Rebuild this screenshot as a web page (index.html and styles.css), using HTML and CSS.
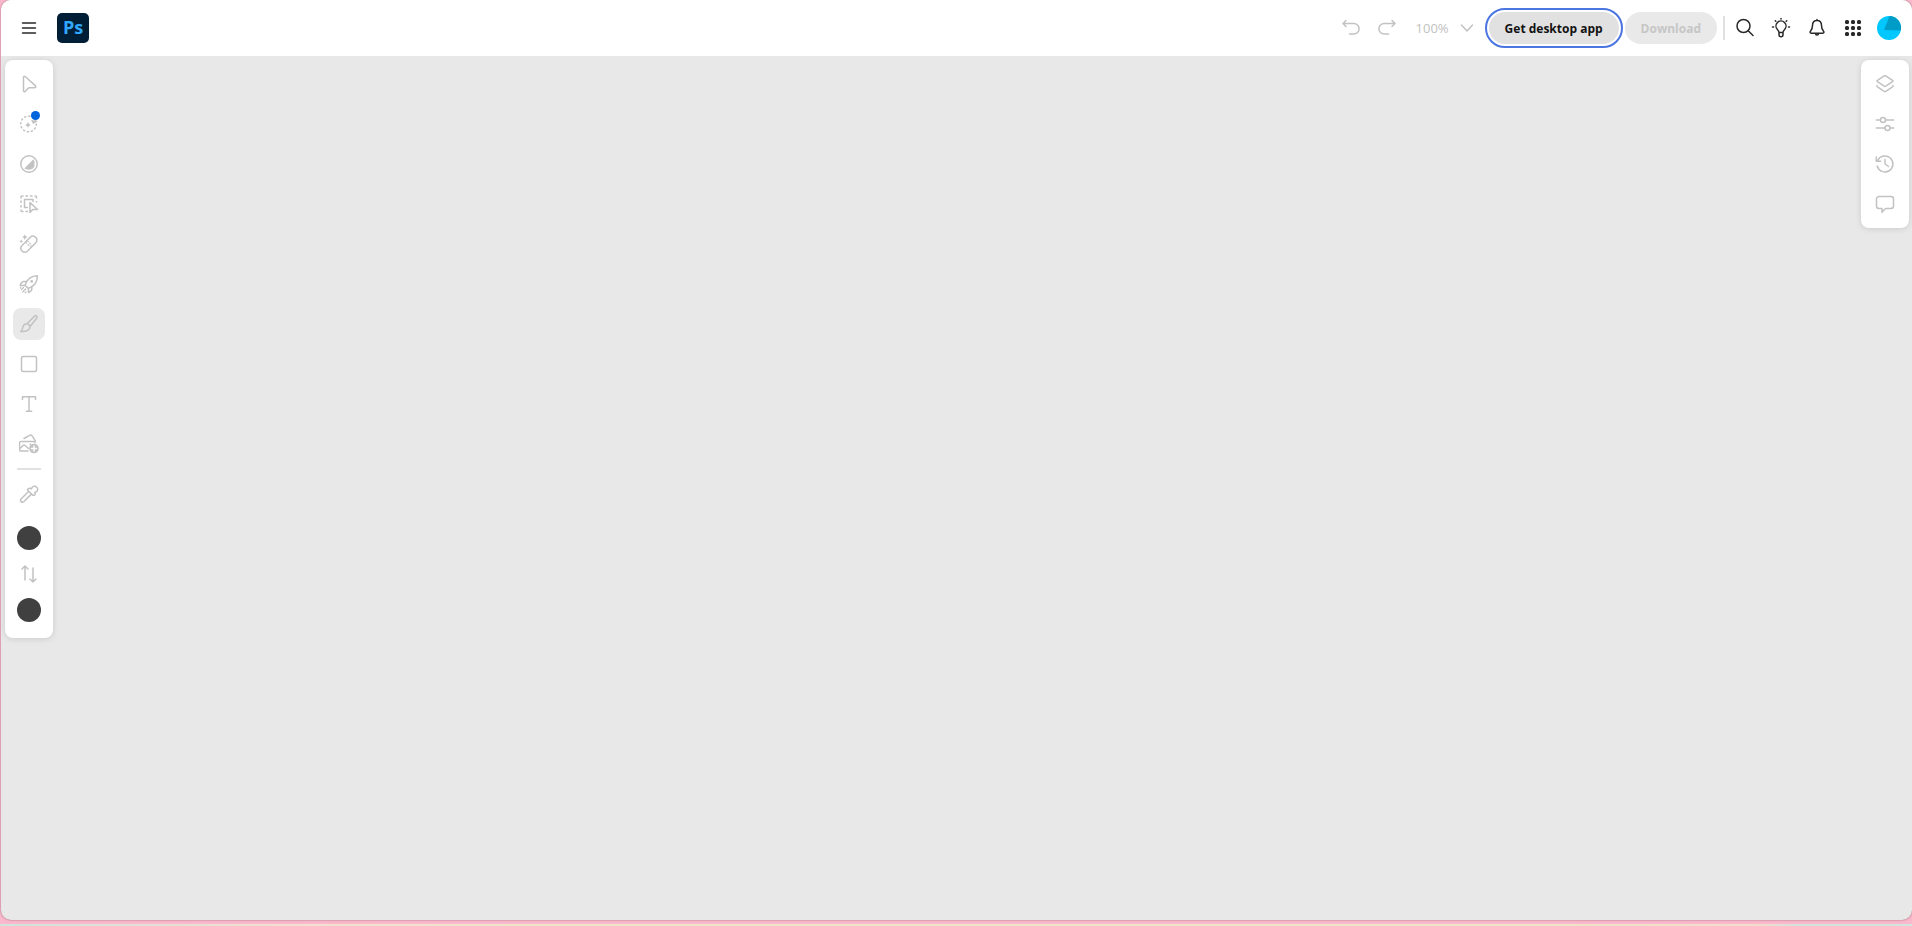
FILE: index.html
```html
<!DOCTYPE html>
<html lang="en">
<head>
    <meta charset="utf-8">
    <title>Photoshop</title>
    <link rel="stylesheet" href="styles.css">
</head>
<body>
    <div class="window">
        <header class="topbar">
            <button class="icon-button" aria-label="Menu">
                <svg viewBox="0 0 20 20"><path d="M3.500 5h13M3.500 10h13M3.500 15h13"/></svg>
            </button>
            <a class="logo" href="#">Ps</a>

            <div class="actions">
                <button class="icon-button disabled" aria-label="Undo" disabled>
                    <svg viewBox="0 0 20 20"><path d="M5 2.500L2 5.500l3 3M2 5.500h10.800a5.300 5.300 0 0 1 0 10.600H8.500"/></svg>
                </button>
                <button class="icon-button disabled" aria-label="Redo" disabled>
                    <svg viewBox="0 0 20 20"><path d="M15 2.500l3 3-3 3M18 5.500H7.200a5.300 5.300 0 0 0 0 10.600h4.300"/></svg>
                </button>
                <button class="zoom-level" disabled>
                    <span>100%</span>
                    <svg viewBox="0 0 20 20"><path d="M4.500 7l5.500 6 5.500-6"/></svg>
                </button>
                <button class="pill desktop-app">Get desktop app</button>
                <button class="pill download" disabled>Download</button>
                <span class="divider"></span>
                <div class="account">
                    <button class="icon-button" aria-label="Search">
                        <svg viewBox="0 0 20 20"><circle cx="8.500" cy="8" r="6.500"/><path d="M13.200 12.700L18 17.500"/></svg>
                    </button>
                    <button class="icon-button" aria-label="Discover">
                        <svg viewBox="0 0 20 20">
                            <path d="M8 14.500c0-1.500-.6-2-1.600-3a5 5 0 1 1 7.200 0c-1 1-1.600 1.500-1.600 3zM8 14.500v2.300a2 2 0 0 0 4 0v-2.300"/>
                            <path d="M10 .5v.6M4.300 2.800l.5.500M15.700 2.800l-.5.500M1.500 9h1M17.500 9h1"/>
                        </svg>
                    </button>
                    <button class="icon-button" aria-label="Notifications">
                        <svg viewBox="0 0 20 20"><path d="M10 2.500c-3 0-4.500 2.200-4.500 5 0 3-.8 4.300-2 5.700-.9 1-.4 2 .7 2h11.600c1.100 0 1.600-1 .7-2-1.200-1.400-2-2.700-2-5.700 0-2.800-1.500-5-4.500-5zM10 1.500v1M8.500 15.500a1.500 1.500 0 0 0 3 0"/></svg>
                    </button>
                    <button class="icon-button" aria-label="Apps">
                        <svg class="solid" viewBox="0 0 20 20">
                            <rect x="2" y="2" width="4" height="4" rx="1.500"/><rect x="8" y="2" width="4" height="4" rx="1.500"/><rect x="14" y="2" width="4" height="4" rx="1.500"/>
                            <rect x="2" y="8" width="4" height="4" rx="1.500"/><rect x="8" y="8" width="4" height="4" rx="1.500"/><rect x="14" y="8" width="4" height="4" rx="1.500"/>
                            <rect x="2" y="14" width="4" height="4" rx="1.500"/><rect x="8" y="14" width="4" height="4" rx="1.500"/><rect x="14" y="14" width="4" height="4" rx="1.500"/>
                        </svg>
                    </button>
                    <button class="icon-button" aria-label="Account">
                        <svg class="avatar" viewBox="0 0 24 24">
                            <circle cx="12" cy="12" r="12" fill="#00c8ff"/>
                            <path d="M7 14L12.500 0A12 12 0 0 1 23.800 14.500z" fill="#009cc8"/>
                        </svg>
                    </button>
                </div>
            </div>
        </header>

        <main class="workspace">
            <nav class="panel" aria-label="Tools">
                <button class="tool" aria-label="Move" disabled>
                    <svg viewBox="0 0 20 20"><path d="M4.500 3.200v13.500c0 1 1 1.400 1.700.7l3-3.200c.3-.3.700-.5 1.100-.5h5.500c1 0 1.400-1.100.7-1.800L6.200 2.500c-.7-.7-1.700-.3-1.700.7z"/></svg>
                </button>
                <button class="tool" aria-label="Quick actions" disabled>
                    <svg viewBox="0 0 20 20">
                        <circle cx="9.500" cy="10" r="7.800" stroke-dasharray="1.200 2.880"/>
                        <path class="fill" d="M9 8l1 1.900 1.900 1-1.900 1-1 1.900-1-1.900-1.900-1 1.900-1z"/>
                        <path class="fill" d="M12 6l7 1-5 3z"/>
                    </svg>
                    <span class="badge"></span>
                </button>
                <button class="tool" aria-label="Adjustments" disabled>
                    <svg viewBox="0 0 20 20"><circle cx="10" cy="10" r="8.200"/><path class="fill" d="M14.500 5.300Q16 7.500 15.500 11.500q-.8 3.500-4 4-3.500.5-6.200-1z"/></svg>
                </button>
                <button class="tool" aria-label="Select" disabled>
                    <svg viewBox="0 0 20 20">
                        <path d="M2 4V3a1 1 0 0 1 1-1h1M7 2h1.500M11.500 2H13M16 2h.5a1 1 0 0 1 1 1v1M17.500 7.500v.5M2 7v1.500M2 11.500V13M2 16v.5a1 1 0 0 0 1 1h1M7 17.500h1.500"/>
                        <path d="M8.500 13.500H5.500v-8H14v2"/>
                        <path class="cutout" d="M11 8.500v10l2.700-3h4.800z"/>
                    </svg>
                </button>
                <button class="tool" aria-label="Retouch" disabled>
                    <svg viewBox="0 0 20 20">
                        <path d="M2.800 11.700l8.500-8.500a3.900 3.900 0 0 1 5.500 5.500l-8.500 8.500a3.900 3.900 0 0 1-5.500-5.500z"/>
                        <path d="M6.800 8.300l5 5M8.300 6.800l5 5" stroke-width="1.200" stroke-dasharray="1.200 2"/>
                        <path class="fill" d="M5.800.2l.9 2 2 .9-2 .9-.9 2-.9-2-2-.9 2-.9zM2.200 5.300l.6 1.400 1.400.6-1.400.6-.6 1.400-.6-1.400-1.400-.6 1.400-.6z"/>
                    </svg>
                </button>
                <button class="tool" aria-label="Quick effects" disabled>
                    <svg viewBox="0 0 20 20">
                        <path d="M6 11.200C8 5.500 12 1.800 18.300 1.700c.3 6.200-3.200 10.500-8.900 12.700zM7.500 7.500H4.800c-1.500 0-3.300 2.300-3.600 4L6 11.200M12.800 12.600v2.700c0 1.400-1.700 2.500-3.300 3.200l-.1-4.100"/>
                        <circle cx="12.700" cy="7.400" r=".7"/>
                        <path d="M4.500 13.500l-2 2M1.500 14v-.5M6.700 15l-3 3M7 18l-.7.700" stroke-width="1.300"/>
                    </svg>
                </button>
                <button class="tool selected" aria-label="Brush" disabled>
                    <svg viewBox="0 0 20 20"><path d="M8 9.800l7.500-7.600c1.500-1.500 3.400.4 2.200 2L11 12.500M8 9.800c1.500.3 2.600 1.200 3 2.700 0 3.500-3 5.200-9.300 5 1-.8 1.500-1.800 1.800-3.200.5-2.800 2-4.600 4.500-4.500z"/></svg>
                </button>
                <button class="tool" aria-label="Shape" disabled>
                    <svg viewBox="0 0 20 20"><rect x="2.500" y="2.500" width="15" height="15" rx="1.500"/></svg>
                </button>
                <button class="tool" aria-label="Type" disabled>
                    <svg viewBox="0 0 20 20"><path d="M3.500 5.500v-2.800h13v2.800M10 2.700v14.600M7.300 17.300h5.400"/></svg>
                </button>
                <button class="tool" aria-label="Add image" disabled>
                    <svg viewBox="0 0 20 20">
                        <path d="M9 17H2a1.500 1.500 0 0 1-1.500-1.500V9A1.500 1.500 0 0 1 2 7.500h12.500a1.500 1.500 0 0 1 1.500 1M1 14.500l3.200-3.200q.8-.6 1.600 0L9.500 14.500"/>
                        <path d="M5 4.500l6-3.300c.8-.4 1.500-.2 2 .5l3.500 5.500"/>
                        <circle class="fill" cx="11.500" cy="10.500" r="1"/>
                        <circle class="fill" cx="15" cy="14.500" r="4.800"/>
                        <path class="plus" d="M15 12v5M12.500 14.500h5"/>
                    </svg>
                </button>
                <span class="separator"></span>
                <button class="tool" aria-label="Eyedropper" disabled>
                    <svg viewBox="0 0 20 20"><path d="M9.800 7.300L2.300 14.800c-2 2 .6 4.700 2.700 2.700l7.600-7.600M8.800 6.300l4.900 4.900c1.900.6 3-1 2.200-2.700 3.500-1 3.200-4 1.800-5.200-1.300-1.400-4.300-1.700-5.300 1.400-2-.9-4.200-.1-3.600 1.600z"/></svg>
                </button>
                <div class="colors">
                    <button class="swatch" aria-label="Foreground color" disabled></button>
                    <button class="tool" aria-label="Swap colors" disabled>
                        <svg viewBox="0 0 20 20"><path d="M6 16V2M3 5l3-3 3 3M14 4v14M11 15l3 3 3-3"/></svg>
                    </button>
                    <button class="swatch" aria-label="Background color" disabled></button>
                </div>
            </nav>

            <aside class="panel" aria-label="Properties">
                <button class="tool" aria-label="Layers" disabled>
                    <svg viewBox="0 0 20 20"><path d="M9.200 1.800L2.500 6.300q-.9.700 0 1.400l6.700 4.500q.8.500 1.600 0l6.700-4.500q.9-.7 0-1.400l-6.700-4.500q-.8-.5-1.600 0zM2 11.500v.5q0 .5.500.9l6.700 4.500q.8.500 1.600 0l6.700-4.500q.5-.4.500-.9v-.5"/></svg>
                </button>
                <button class="tool" aria-label="Adjust" disabled>
                    <svg viewBox="0 0 20 20"><path d="M1.300 6h4.200M10.500 6h8.200M1.300 14h8.700M15 14h3.700"/><circle cx="8" cy="6" r="2.500"/><circle cx="12.500" cy="14" r="2.500"/></svg>
                </button>
                <button class="tool" aria-label="History" disabled>
                    <svg viewBox="0 0 20 20"><path d="M2.700 6.500a8 8 0 1 1-.5 5.500M1.300 3v4.200h4.400M10 5.500V10l3.500 2.500"/></svg>
                </button>
                <button class="tool" aria-label="Comments" disabled>
                    <svg viewBox="0 0 20 20"><path d="M4 2.500h12A2.500 2.500 0 0 1 18.500 5v7a2.500 2.500 0 0 1-2.500 2.500h-5.500L7 18.200v-3.700H4A2.500 2.500 0 0 1 1.500 12V5A2.500 2.500 0 0 1 4 2.500z"/></svg>
                </button>
            </aside>
        </main>
    </div>
    <footer class="edge"></footer>
</body>
</html>
```
FILE: styles.css
```css
* {
    box-sizing: border-box;
}
body {
    margin: 0;
    height: 100vh;
    display: flex;
    flex-direction: column;
    padding-left: 1px;
    background: #f9b8cb;
    font-family: "Open Sans", "Noto Sans", sans-serif;
    font-size: 13px;
    overflow: hidden;
}
.window {
    flex: 1;
    display: flex;
    flex-direction: column;
    border-radius: 10px;
    background: #e8e8e8;
    box-shadow: 0 0 2px rgba(80, 40, 55, 0.6);
    overflow: hidden;
}
.edge {
    height: 2px;
    margin: 4px 0 0 -1px;
    background: linear-gradient(90deg, #cfe3dd, #f3dfd0 15%, #eee4c8 30%, #eee4c8 80%, #f3dccb 92%, #d3e3dd 94%);
}
button {
    padding: 0;
    border: 0;
    background: none;
    color: #292929;
    font: inherit;
}
svg {
    display: block;
    width: 20px;
    height: 20px;
    fill: none;
    stroke: currentColor;
    stroke-width: 1.5;
    stroke-linecap: round;
    stroke-linejoin: round;
}
.solid,
.fill {
    fill: currentColor;
    stroke: none;
}

/* top bar */
.topbar {
    height: 56px;
    display: flex;
    align-items: center;
    padding: 0 7px 0 12px;
    background: #fff;
}
.icon-button {
    width: 32px;
    height: 32px;
    display: flex;
    align-items: center;
    justify-content: center;
}
.disabled,
.zoom-level {
    color: #c2c2c2;
}
.logo {
    width: 32px;
    height: 30px;
    margin-left: 12px;
    border-radius: 5px;
    background: #001e36;
    color: #31a8ff;
    font-size: 18px;
    font-weight: 700;
    line-height: 28px;
    text-align: center;
    text-decoration: none;
}
.actions {
    display: flex;
    align-items: center;
    gap: 4px;
    margin-left: auto;
}
.zoom-level {
    display: flex;
    align-items: center;
    gap: 8px;
    padding: 0 4px 0 9px;
}
.pill {
    height: 32px;
    padding: 0 16px;
    border-radius: 16px;
    font-size: 12px;
    font-weight: 700;
}
.desktop-app {
    margin: 0 2px 0 4px;
    background: #e1e1e1;
    color: #131313;
    outline: 2px solid #4b75e0;
    outline-offset: 2px;
}
.download {
    background: #e9e9e9;
    color: #c6c6c6;
}
.divider {
    width: 2px;
    height: 24px;
    margin-left: 2px;
    background: #e1e1e1;
}
.account {
    display: flex;
    gap: 4px;
}
.icon-button .avatar {
    width: 24px;
    height: 24px;
    stroke: none;
}

/* floating panels */
.workspace {
    display: flex;
    justify-content: space-between;
    align-items: flex-start;
    padding: 4px 3px 4px 4px;
}
.panel {
    width: 48px;
    display: flex;
    flex-direction: column;
    align-items: center;
    gap: 8px;
    padding: 8px;
    border-radius: 8px;
    background: #fff;
    box-shadow: 0 1px 6px rgba(0, 0, 0, 0.12);
}
.tool {
    position: relative;
    width: 32px;
    height: 32px;
    display: flex;
    align-items: center;
    justify-content: center;
    border-radius: 8px;
    color: #c2c2c2;
}
.selected {
    background: #e9e9e9;
}
.badge {
    position: absolute;
    top: 3px;
    right: 5px;
    width: 9px;
    height: 9px;
    border-radius: 50%;
    background: #0265dc;
}
.plus {
    stroke: #fff;
}
.cutout {
    fill: #fff;
}
.separator {
    width: 24px;
    height: 2px;
    background: #e1e1e1;
}
.colors {
    display: flex;
    flex-direction: column;
    align-items: center;
    gap: 8px;
    padding: 8px 0;
}
.swatch {
    width: 24px;
    height: 24px;
    border-radius: 50%;
    background: #404040;
}
```
